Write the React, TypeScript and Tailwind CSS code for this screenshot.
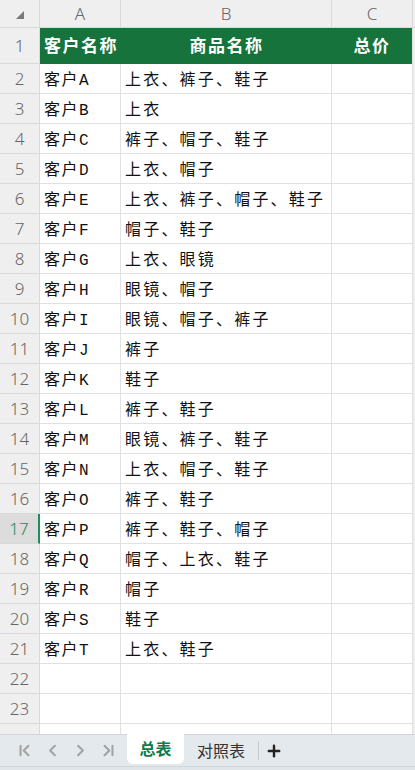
import { ChevronLeft, ChevronRight, ChevronFirst, ChevronLast, Plus } from 'lucide-react';

// rows 2..23 of the sheet
const data: [string, string][] = [
  ['客户A', '上衣、裤子、鞋子'],
  ['客户B', '上衣'],
  ['客户C', '裤子、帽子、鞋子'],
  ['客户D', '上衣、帽子'],
  ['客户E', '上衣、裤子、帽子、鞋子'],
  ['客户F', '帽子、鞋子'],
  ['客户G', '上衣、眼镜'],
  ['客户H', '眼镜、帽子'],
  ['客户I', '眼镜、帽子、裤子'],
  ['客户J', '裤子'],
  ['客户K', '鞋子'],
  ['客户L', '裤子、鞋子'],
  ['客户M', '眼镜、裤子、鞋子'],
  ['客户N', '上衣、帽子、鞋子'],
  ['客户O', '裤子、鞋子'],
  ['客户P', '裤子、鞋子、帽子'],
  ['客户Q', '帽子、上衣、鞋子'],
  ['客户R', '帽子'],
  ['客户S', '鞋子'],
  ['客户T', '上衣、鞋子'],
  ['', ''],
  ['', ''],
];

const ACTIVE_ROW = 17;

const cell = 'border-r border-b border-[#e1e1e1] flex items-center';
const head = 'border-r border-b border-[#d9d9d9] bg-[#efefef] flex items-center justify-center text-[#666] text-[17px] font-light';

export default function App() {
  return (
    <div
      className="w-[415px] h-[770px] overflow-hidden flex flex-col bg-white text-[#111]"
      style={{ fontFamily: '"Noto Sans", "Noto Sans CJK SC", sans-serif' }}
    >
      <div className="grid grid-cols-[40px_81px_211px_81px_2px] grid-rows-[28px_36px] auto-rows-[30px]">
        {/* column letters */}
        <div className={head}>
          <svg width="8" height="8" viewBox="0 0 8 8" className="mt-[3px]">
            <polygon points="8,0 8,8 0,8" fill="#7a7a7a" />
          </svg>
        </div>
        <div className={head}>A</div>
        <div className={head}>B</div>
        <div className={head}>C</div>
        <div className="bg-[#efefef] border-b border-[#d9d9d9]" />

        {/* header row */}
        <div className={head}>1</div>
        <div className="bg-[#15733b] flex items-center pl-[4px] text-white font-bold text-[17px] tracking-[1.5px]">客户名称</div>
        <div className="bg-[#15733b] flex items-center justify-center text-white font-bold text-[17px] tracking-[1.5px]">商品名称</div>
        <div className="bg-[#15733b] border-r border-[#e1e1e1] flex items-center justify-center text-white font-bold text-[17px] tracking-[1.5px]">总价</div>
        <div className="bg-[#efefef]" />

        {data.map(([name, goods], i) => {
          const n = i + 2;
          const active = n === ACTIVE_ROW;
          return (
            <div key={n} className="contents">
              <div
                className={
                  active
                    ? 'border-b border-r-2 border-b-[#d9d9d9] border-r-[#1b8f5e] bg-[#dcdcdc] flex items-center justify-center text-[#1b8a62] text-[17px] font-light'
                    : head
                }
              >
                {n}
              </div>
              <div className={`${cell} pl-[4px] text-[16px] leading-[22px] tracking-[1.5px]`}>
                <span>
                  {name.slice(0, 2)}
                  <span className="font-['Liberation_Mono',monospace] leading-none">{name.slice(2)}</span>
                </span>
              </div>
              <div className={`${cell} pl-[4px] text-[16px] leading-[22px] tracking-[2.2px] whitespace-nowrap`}>{goods}</div>
              <div className={cell} />
              <div className="bg-[#efefef]" />
            </div>
          );
        })}
      </div>

      {/* partial row */}
      <div className="flex-1 grid grid-cols-[40px_81px_211px_81px_2px]">
        <div className="bg-[#efefef] border-r border-[#d9d9d9]" />
        <div className="border-r border-[#e1e1e1]" />
        <div className="border-r border-[#e1e1e1]" />
        <div className="border-r border-[#e1e1e1]" />
        <div className="bg-[#efefef]" />
      </div>

      {/* sheet tabs */}
      <div className="h-[32px] bg-[#e3e9ec] border-t border-[#cfd6da] flex items-stretch">
        <div className="flex items-center gap-[9px] pl-[15px] w-[127px] text-[#a3a3a3]">
          <ChevronFirst size={19} strokeWidth={2.6} />
          <ChevronLeft size={19} strokeWidth={2.6} />
          <ChevronRight size={19} strokeWidth={2.6} />
          <ChevronLast size={19} strokeWidth={2.6} />
        </div>
        <div className="-mt-px w-[57px] bg-white rounded-b-[6px] flex items-center justify-center text-[#0f7a4b] font-bold text-[16px] mb-[2px]">
          总表
        </div>
        <div className="w-[74px] flex items-center justify-center text-[#333] text-[16px]">对照表</div>
        <div className="w-px bg-[#c4cacd] my-[6px]" />
        <div className="flex items-center pl-[6px] text-[#222]">
          <Plus size={18} strokeWidth={3.2} />
        </div>
      </div>
      <div className="h-[4px] bg-[#dfe5e8] border-t border-[#cfd6da]" />
    </div>
  );
}
